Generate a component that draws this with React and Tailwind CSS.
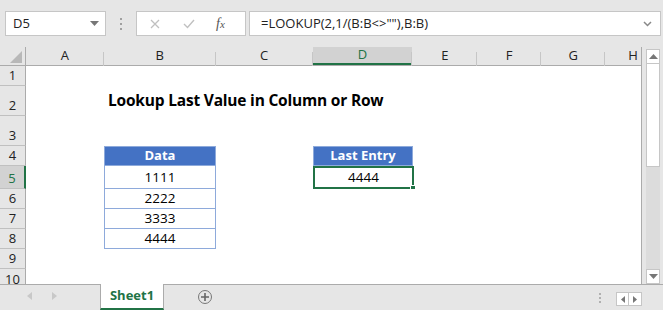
import React from "react";

const cols = [
  { l: "A", w: 78 },
  { l: "B", w: 112 },
  { l: "C", w: 97 },
  { l: "D", w: 100, sel: true },
  { l: "E", w: 65 },
  { l: "F", w: 64 },
  { l: "G", w: 64 },
  { l: "H", w: 36 },
];
const rows = [
  { n: 1, h: 20 },
  { n: 2, h: 30 },
  { n: 3, h: 30 },
  { n: 4, h: 20 },
  { n: 5, h: 23, sel: true },
  { n: 6, h: 20 },
  { n: 7, h: 20 },
  { n: 8, h: 20 },
  { n: 9, h: 20 },
  { n: 10, h: 15, cut: true },
];

const ui = { fontFamily: '"Open Sans", "Noto Sans", sans-serif' };
const cell = { fontFamily: '"Open Sans", "Noto Sans", sans-serif' };

function RowContent({ n }) {
  if (n === 2)
    return (
      <div className="flex h-full items-center pl-[82px] text-[15.5px] font-bold text-black tracking-[-0.2px]" style={cell}>
        Lookup Last Value in Column or Row
      </div>
    );
  if (n === 4)
    return (
      <div className="flex h-full">
        <div className="w-[78px]" />
        <div className="flex w-[112px] items-center justify-center border border-[#8eaadb] bg-[#4472c4] text-[13px] font-bold text-white" style={cell}>Data</div>
        <div className="w-[97px]" />
        <div className="flex w-[100px] items-center justify-center border border-[#8eaadb] bg-[#4472c4] text-[13px] font-bold text-white" style={cell}>Last Entry</div>
      </div>
    );
  if (n >= 5 && n <= 8) {
    const v = ["1111", "2222", "3333", "4444"][n - 5];
    return (
      <div className="flex h-full">
        <div className="w-[78px]" />
        <div className="flex w-[112px] items-center justify-center border-x border-b border-[#8eaadb] text-[13.5px] text-black" style={cell}>{v}</div>
        <div className="w-[97px]" />
        {n === 5 && (
          <div className="relative flex w-[101px] items-center justify-center border-2 border-[#217346] text-[13.5px] text-black" style={cell}>
            4444
            <div className="absolute -bottom-[4px] -right-[4px] h-[6px] w-[6px] border border-white bg-[#217346]" />
          </div>
        )}
      </div>
    );
  }
  return null;
}

export default function App() {
  return (
    <div className="flex h-[310px] w-[663px] flex-col overflow-hidden bg-[#e6e6e6]" style={ui}>
      {/* formula bar */}
      <div className="flex h-[47px] items-start pt-[11px]">
        <div className="ml-[5px] flex h-[25px] w-[101px] items-center justify-between border border-[#c6c6c6] bg-white pl-[7px] pr-[6px] text-[13px] text-[#222]">
          <span>D5</span>
          <svg width="9" height="5" viewBox="0 0 9 5"><path d="M0 0h9L4.5 5z" fill="#777" /></svg>
        </div>
        <div className="mx-[14px] mt-[7px] flex flex-col gap-[3px]">
          <div className="h-[2px] w-[2px] bg-[#a0a0a0]" />
          <div className="h-[2px] w-[2px] bg-[#a0a0a0]" />
          <div className="h-[2px] w-[2px] bg-[#a0a0a0]" />
        </div>
        <div className="flex h-[25px] w-[110px] items-center border border-[#c6c6c6] bg-white">
          <svg className="ml-[13px]" width="10" height="10" viewBox="0 0 10 10"><path d="M1 1L9 9M9 1L1 9" stroke="#c0c0c0" strokeWidth="1.3" /></svg>
          <svg className="ml-[23px]" width="12" height="10" viewBox="0 0 12 10"><path d="M1 5L4.5 8.5L11 1" stroke="#c0c0c0" strokeWidth="1.4" fill="none" /></svg>
          <span className="ml-[21px] text-[14px] italic text-[#555]" style={{ fontFamily: '"Liberation Serif", serif' }}>
            f<span className="text-[11px]">x</span>
          </span>
        </div>
        <div className="ml-[3px] flex h-[25px] w-[412px] items-center justify-between border border-[#c6c6c6] bg-white pl-[11px] pr-[8px] text-[13px] text-[#222]">
          <span>=LOOKUP(2,1/(B:B&lt;&gt;""),B:B)</span>
          <svg width="9" height="6" viewBox="0 0 9 6"><path d="M1 1L4.5 4.5L8 1" stroke="#888" strokeWidth="1.5" fill="none" /></svg>
        </div>
      </div>

      {/* sheet area */}
      <div className="flex h-[237px]">
        <div className="flex w-[642px] flex-col border-r border-[#ababab]">
          {/* column header */}
          <div className="flex h-[19px] border-b border-[#ababab]">
            <div className="relative w-[26px] border-r border-[#ababab]">
              <svg className="absolute bottom-[2px] right-[3px]" width="12" height="12" viewBox="0 0 12 12"><path d="M12 0V12H0z" fill="#b8b8b8" /></svg>
            </div>
            {cols.map((c) => (
              <div
                key={c.l}
                className={`relative flex items-center justify-center text-[13px] ${c.sel ? "bg-[#d2d2d2] text-[#217346] border-b-2 border-[#217346]" : "text-[#222]"}`}
                style={{ width: c.w }}
              >
                <span className={c.l === "H" ? "mr-[-20px] text-[#222]" : ""}>{c.l}</span>
                {c.l !== "H" && <div className="absolute right-0 top-[5px] h-[14px] w-px bg-[#c6c6c6]" />}
              </div>
            ))}
          </div>
          {/* rows */}
          <div className="flex flex-1 flex-col overflow-hidden">
            {rows.map((r) => (
              <div key={r.n} className="flex shrink-0 overflow-hidden" style={{ height: r.h }}>
                <div
                  className={`flex w-[26px] shrink-0 justify-center overflow-hidden text-[13px] leading-[17px] ${r.cut ? "items-start pt-[2px]" : "items-end border-b border-[#c0c0c0] pb-[1px]"} ${r.sel ? "bg-[#d2d2d2] text-[#217346] border-r-2 border-r-[#217346]" : "bg-[#e6e6e6] text-[#222] border-r border-r-[#ababab]"}`}
                >
                  {r.n}
                </div>
                <div className="flex-1 bg-white">
                  <RowContent n={r.n} />
                </div>
              </div>
            ))}
          </div>
        </div>
        {/* vertical scrollbar */}
        <div className="flex w-[21px] flex-col pl-[4px] pr-[3px] pt-[2px]">
          <div className="flex h-[15px] items-center justify-center border border-[#c6c6c6] bg-white">
            <svg width="9" height="5" viewBox="0 0 9 5"><path d="M4.5 0L9 5H0z" fill="#777" /></svg>
          </div>
          <div className="h-[103px] border-x border-b border-[#c6c6c6] bg-white" />
          <div className="flex-1 bg-[#dcdcdc]" />
          <div className="flex h-[15px] items-center justify-center border border-[#c6c6c6] bg-white">
            <svg width="9" height="5" viewBox="0 0 9 5"><path d="M0 0h9L4.5 5z" fill="#777" /></svg>
          </div>
        </div>
      </div>

      {/* tab bar */}
      <div className="relative flex h-[26px] items-start border-t border-[#ababab]">
        <div className="flex w-[100px] items-center gap-[20px] pl-[27px] pt-[7px]">
          <svg width="5" height="8" viewBox="0 0 5 8"><path d="M5 0V8L0 4z" fill="#c8c8c8" /></svg>
          <svg width="5" height="8" viewBox="0 0 5 8"><path d="M0 0V8L5 4z" fill="#c8c8c8" /></svg>
        </div>
        <div className="-mt-px flex h-[26px] w-[64px] items-center justify-center border-x border-[#ababab] bg-white text-[13px] font-bold text-[#217346] border-b-2 border-b-[#217346]">
          Sheet1
        </div>
        <div className="ml-[34px] mt-[5px] flex h-[14px] w-[14px] items-center justify-center rounded-full border-[1.5px] border-[#777]">
          <svg width="8" height="8" viewBox="0 0 8 8"><path d="M4 0V8M0 4H8" stroke="#666" strokeWidth="1.6" /></svg>
        </div>
        <div className="ml-auto mr-[21px] mt-[7px] flex items-start">
          <div className="mr-[15px] mt-px flex flex-col gap-[2px]">
            <div className="h-[2px] w-[2px] bg-[#b0b0b0]" />
            <div className="h-[2px] w-[2px] bg-[#b0b0b0]" />
            <div className="h-[2px] w-[2px] bg-[#b0b0b0]" />
          </div>
          <div className="flex h-[14px] w-[13px] items-center justify-center border border-[#c6c6c6] bg-white">
            <svg width="4" height="7" viewBox="0 0 4 7"><path d="M4 0V7L0 3.5z" fill="#777" /></svg>
          </div>
          <div className="flex h-[14px] w-[13px] items-center justify-center border border-l-0 border-[#c6c6c6] bg-white">
            <svg width="4" height="7" viewBox="0 0 4 7"><path d="M0 0V7L4 3.5z" fill="#777" /></svg>
          </div>
        </div>
      </div>
    </div>
  );
}
